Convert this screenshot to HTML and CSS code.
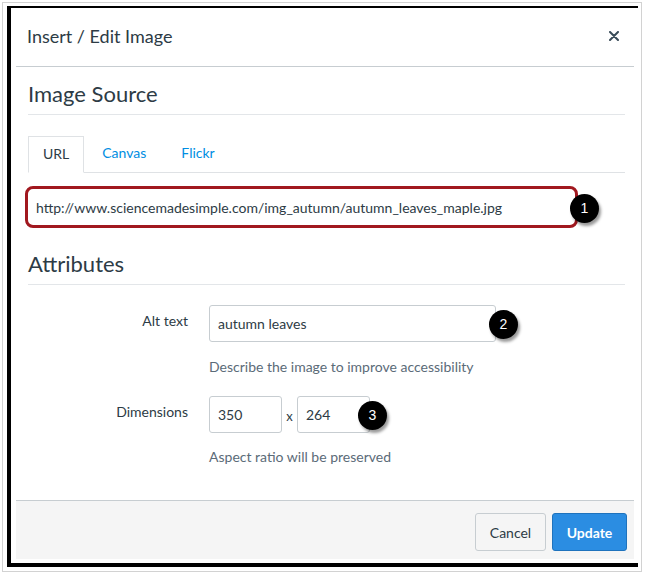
FILE: index.html
```html
<!DOCTYPE html>
<html>
<head>
<meta charset="utf-8">
<link rel="stylesheet" href="styles.css">
</head>
<body>
<div class="page">
  <div class="shot">
    <div class="dialog">
      <div class="header">
        <h1 class="title">Insert / Edit Image</h1>
        <svg class="close" width="10" height="10" viewBox="0 0 10 10"><path d="M1 1L9 9M9 1L1 9" stroke="#394b58" stroke-width="2" stroke-linecap="round"/></svg>
      </div>
      <div class="body">
        <h2 class="section">Image Source</h2>
        <div class="tabs">
          <span class="tab active">URL</span>
          <span class="tab">Canvas</span>
          <span class="tab">Flickr</span>
        </div>
        <div class="urlbox">
          <span class="urltext">http://www.sciencemadesimple.com/img_autumn/autumn_leaves_maple.jpg</span>
          <span class="badge b1">1</span>
        </div>
        <h2 class="section attrs">Attributes</h2>
        <div class="row">
          <div class="label">Alt text</div>
          <div class="control">
            <div class="input alt">autumn leaves<span class="badge b2">2</span></div>
            <div class="help">Describe the image to improve accessibility</div>
          </div>
        </div>
        <div class="row dims">
          <div class="label">Dimensions</div>
          <div class="control">
            <div class="dimline">
              <div class="input num">350</div>
              <span class="times">x</span>
              <div class="input num">264<span class="badge b3">3</span></div>
            </div>
            <div class="help">Aspect ratio will be preserved</div>
          </div>
        </div>
      </div>
      <div class="footer">
        <button class="btn cancel">Cancel</button>
        <button class="btn update">Update</button>
      </div>
    </div>
  </div>
</div>
</body>
</html>
```

FILE: styles.css
```css
* { box-sizing: border-box; }
html, body { margin: 0; padding: 0; background: #fff; }
body { font-family: Lato, "Open Sans", "Liberation Sans", sans-serif; color: #2d3b45; }

.page {
  margin: 2px 0 0 2px;
  width: 640px;
  height: 570px;
  border: 1px solid #d2d2d2;
  padding: 3px 0 0 4px;
}
.shot {
  width: 631px;
  height: 561px;
  border-left: 4px solid #000;
  border-top: 2px solid #000;
  border-bottom: 4px solid #000;
  padding: 0 4px 4px 5px;
  background: #fff;
}
.dialog {
  height: 100%;
  display: flex;
  flex-direction: column;
}
.header {
  height: 59px;
  border-bottom: 1px solid #c7cdd1;
  display: flex;
  align-items: center;
  justify-content: space-between;
  padding: 0 15px 3px 11px;
}
.title {
  margin: 0;
  font-size: 18px;
  font-weight: 400;
  line-height: 24px;
  color: #2d3b45;
}
.close { display: block; }

.body {
  flex: 1;
  padding: 14px 9px 0 12px;
}
.section {
  margin: 0;
  font-size: 22px;
  font-weight: 400;
  line-height: 26px;
  padding-bottom: 7px;
  border-bottom: 1px solid #e3e6e9;
  color: #2d3b45;
}
.tabs {
  margin-top: 21px;
  height: 37px;
  border-bottom: 1px solid #dfe2e5;
  display: flex;
}
.tab {
  font-size: 14px;
  line-height: 34px;
  padding: 0 17px 0 18px;
  color: #008ee2;
  height: 36px;
}
.tab.active {
  color: #2d3b45;
  padding: 0 14px;
  border: 1px solid #dfe2e5;
  border-bottom: 1px solid #fff;
  height: 37px;
  background: #fff;
}
.urlbox {
  position: relative;
  margin: 13px 0 0 -3px;
  width: 553px;
  height: 42px;
  border: 3px solid #a1181f;
  border-radius: 8px;
  padding: 0 0 0 8px;
  display: flex;
  align-items: center;
  font-size: 14px;
  color: #2d3b45;
}
.urltext { white-space: nowrap; }

.attrs { margin-top: 23px; }

.row {
  display: flex;
  margin-top: 20px;
}
.row.dims { margin-top: 19px; }
.label {
  width: 160px;
  margin-right: 21px;
  text-align: right;
  font-size: 14px;
  line-height: 20px;
  padding-top: 6px;
  color: #2d3b45;
}
.control { display: flex; flex-direction: column; }
.input {
  position: relative;
  height: 37px;
  border: 1px solid #c7cdd1;
  border-radius: 3px;
  padding: 0 8px;
  display: flex;
  align-items: center;
  font-size: 14px;
  color: #2d3b45;
  background: #fff;
}
.input.alt { width: 287px; }
.input.num { width: 73px; }
.dimline { display: flex; align-items: center; }
.times {
  width: 15px;
  text-align: center;
  font-size: 13px;
  color: #2d3b45;
  padding-top: 2px;
}
.help {
  font-size: 14px;
  line-height: 20px;
  color: #5b6b78;
  margin-top: 15px;
}
.dims .help { margin-top: 14px; }

.badge {
  position: absolute;
  width: 29px;
  height: 29px;
  border-radius: 50%;
  background: #000;
  color: #fff;
  font-family: "Liberation Sans", Arial, sans-serif;
  font-size: 14px;
  line-height: 29px;
  text-align: center;
  box-shadow: 2px 3px 3px rgba(0,0,0,0.4);
}
.b1 { right: -24px; top: 5px; }
.b2 { right: -23px; top: 4px; }
.b3 { right: -18px; top: 4px; }

.footer {
  height: 59px;
  border-top: 1px solid #c7cdd1;
  background: #f5f5f5;
  display: flex;
  justify-content: flex-end;
  align-items: flex-start;
  gap: 6px;
  padding: 12px 7px 0 0;
}
.btn {
  height: 38px;
  border-radius: 3px;
  font-family: Lato, "Open Sans", "Liberation Sans", sans-serif;
  font-size: 14px;
  padding: 0;
  cursor: pointer;
}
.cancel {
  width: 71px;
  background: #f5f5f5;
  border: 1px solid #c7cdd1;
  color: #2d3b45;
}
.update {
  width: 75px;
  background: #2b8de2;
  border: 1px solid #1f73bd;
  color: #fff;
  font-weight: 700;
}
```
